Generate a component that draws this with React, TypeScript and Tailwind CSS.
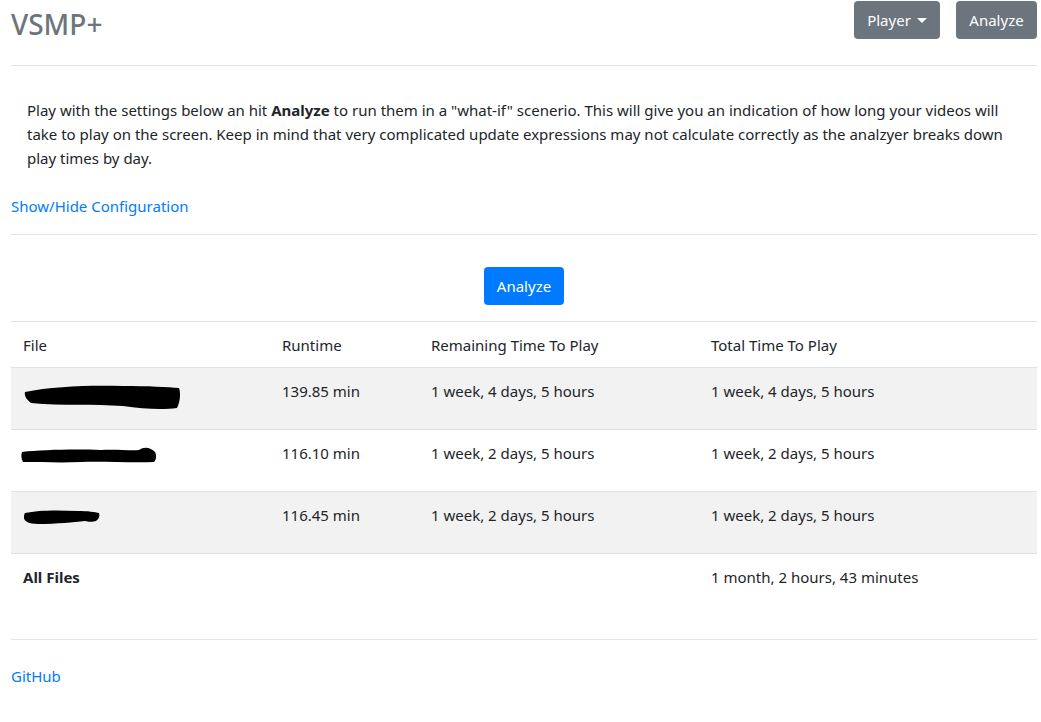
import React from "react";

const font = { fontFamily: '"Noto Sans", "Open Sans", sans-serif' };

function Scribble({ w, h, d }: { w: number; h: number; d: string }) {
  return (
    <svg width={w} height={h} viewBox={`0 0 ${w} ${h}`} className="block">
      <path d={d} fill="#000" />
    </svg>
  );
}

const rows = [
  {
    runtime: "139.85 min",
    remaining: "1 week, 4 days, 5 hours",
    total: "1 week, 4 days, 5 hours",
    striped: true,
    scribble: (
      <div className="mt-[5px]">
        <Scribble
          w={158}
          h={26}
          d="M2 8 C30 2 70 1 100 2 C125 2 145 3 156 4 C158 10 157 18 154 24 C140 26 120 25 100 22 C70 20 40 22 8 19 C4 16 1 12 2 8 Z"
        />
      </div>
    ),
  },
  {
    runtime: "116.10 min",
    remaining: "1 week, 2 days, 5 hours",
    total: "1 week, 2 days, 5 hours",
    striped: false,
    scribble: (
      <div className="-ml-[2px] mt-[5px]">
        <Scribble
          w={136}
          h={18}
          d="M1 6 C20 4 50 3 80 4 C95 3 110 5 118 4 C124 0 130 2 134 6 C136 10 135 14 133 16 C110 17 80 15 60 16 C40 17 20 16 2 16 C0 12 0 9 1 6 Z"
        />
      </div>
    ),
  },
  {
    runtime: "116.45 min",
    remaining: "1 week, 2 days, 5 hours",
    total: "1 week, 2 days, 5 hours",
    striped: true,
    scribble: (
      <div className="mt-[6px]">
        <Scribble
          w={77}
          h={16}
          d="M2 4 C15 1 35 1 55 2 C65 2 72 3 76 4 C77 7 76 10 73 12 C70 13 65 13 62 12 C50 13 35 15 15 15 C6 15 1 12 1 9 C1 7 1 5 2 4 Z"
        />
      </div>
    ),
  },
];

export default function App() {
  return (
    <div className="bg-white min-h-[722px] text-[#212529] text-[15px] leading-[24px]" style={font}>
      <div className="pl-[11px] pr-[4px]">
        {/* header */}
        <div className="flex justify-between items-start pt-[1px]">
          <h3 className="text-[28px] leading-[34px] font-medium text-[#6c757d] mt-[6px]">VSMP+</h3>
          <div className="flex gap-4">
            <button className="h-[38px] w-[86px] rounded-[4px] bg-[#6c757d] text-white flex items-center justify-center">
              Player
              <span className="ml-[6px] inline-block w-0 h-0 border-l-[5px] border-r-[5px] border-t-[5px] border-l-transparent border-r-transparent border-t-white" />
            </button>
            <button className="h-[38px] w-[81px] rounded-[4px] bg-[#6c757d] text-white">Analyze</button>
          </div>
        </div>
        <div className="mt-[24px] h-px bg-[#e5e5e5]" />

        <p className="px-4 mt-[32px]">
          Play with the settings below an hit <b className="font-bold">Analyze</b> to run them in a "what-if" scenerio.
          This will give you an indication of how long your videos will take to play on the screen. Keep in mind that
          very complicated update expressions may not calculate correctly as the analzyer breaks down play times by day.
        </p>

        <a className="block mt-6 text-[#007bff] w-fit" href="#">
          Show/Hide Configuration
        </a>
        <div className="mt-4 h-px bg-[#e5e5e5]" />

        <div className="flex justify-center mt-8">
          <button className="h-[38px] w-[80px] rounded-[4px] bg-[#007bff] text-white">Analyze</button>
        </div>

        <div className="mt-4 border-t border-[#dee2e6]">
          <div className="grid grid-cols-[259px_149px_280px_1fr] h-[46px] border-b border-[#dee2e6]">
            <div className="px-3 pt-[11px]">File</div>
            <div className="px-3 pt-[11px]">Runtime</div>
            <div className="px-3 pt-[11px]">Remaining Time To Play</div>
            <div className="px-3 pt-[11px]">Total Time To Play</div>
          </div>
          {rows.map((r, i) => (
            <div
              key={i}
              className={`grid grid-cols-[259px_149px_280px_1fr] h-[62px] border-b border-[#dee2e6] ${
                r.striped ? "bg-[#f2f2f2]" : "bg-white"
              }`}
            >
              <div className="px-3 pt-[11px]">{r.scribble}</div>
              <div className="px-3 pt-[11px]">{r.runtime}</div>
              <div className="px-3 pt-[11px]">{r.remaining}</div>
              <div className="px-3 pt-[11px]">{r.total}</div>
            </div>
          ))}
          <div className="grid grid-cols-[259px_149px_280px_1fr] h-[62px]">
            <div className="px-3 pt-[11px] font-bold">All Files</div>
            <div className="px-3 pt-[11px]"></div>
            <div className="px-3 pt-[11px]"></div>
            <div className="px-3 pt-[11px]">1 month, 2 hours, 43 minutes</div>
          </div>
        </div>

        <div className="mt-[23px] h-px bg-[#e5e5e5]" />
        <a className="block mt-6 text-[#007bff] w-fit" href="#">
          GitHub
        </a>
      </div>
    </div>
  );
}
